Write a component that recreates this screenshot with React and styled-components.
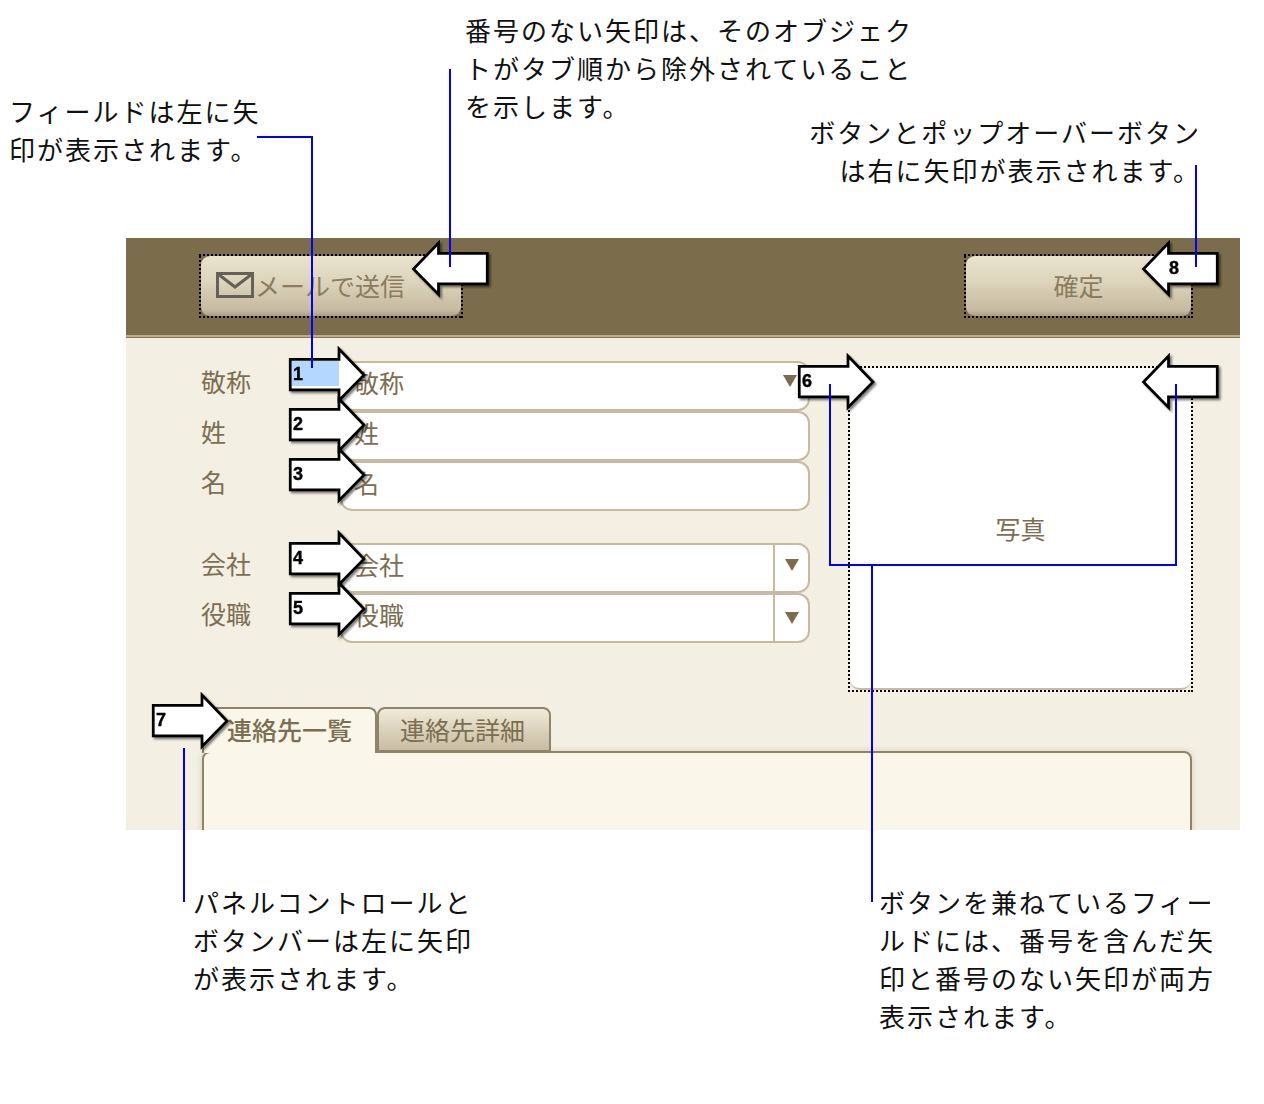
import React from "react";
import styled, { createGlobalStyle, css } from "styled-components";

const Global = createGlobalStyle`
  html, body { margin: 0; padding: 0; background: #fff; }
  body { font-family: "Noto Sans CJK JP", "Liberation Sans", sans-serif; }
`;

const TEXT = "#7c6e50";
const LINE = "#c6baa0";

const dots = css`
  padding: 2px;
  background-image:
    repeating-linear-gradient(90deg, #000 0 2.5px, transparent 2.5px 4px),
    repeating-linear-gradient(90deg, #000 0 2.5px, transparent 2.5px 4px),
    repeating-linear-gradient(0deg, #000 0 2.5px, transparent 2.5px 4px),
    repeating-linear-gradient(0deg, #000 0 2.5px, transparent 2.5px 4px);
  background-size: 100% 2px, 100% 2px, 2px 100%, 2px 100%;
  background-position: left top, left bottom, left top, right top;
  background-repeat: no-repeat;
`;

const Canvas = styled.div`
  position: relative;
  width: 1264px;
  height: 1104px;
  padding: 238px 24px 0 126px;
  box-sizing: border-box;
  overflow: hidden;
`;
const Win = styled.div`
  position: relative;
  z-index: 0;
  width: 1114px;
  height: 592px;
  background: #f4efe3;
  overflow: hidden;
`;
const Toolbar = styled.div`
  height: 97px;
  box-sizing: border-box;
  padding: 16px 47px 0 73px;
  display: flex;
  justify-content: space-between;
  align-items: flex-start;
  background: #7b6d4c;
`;
const ToolbarEdge = styled.div`
  height: 3px;
  background: linear-gradient(#bcae93 0 66%, #83745a 66%);
`;
const FocusRing = styled.div`
  ${dots}
  display: flex;
`;
const ToolButton = styled.div`
  width: ${(p) => p.$w}px;
  height: 60px;
  box-sizing: border-box;
  padding: 0 15px 2px;
  border-radius: 9px;
  background: linear-gradient(#eae3ce 0%, #dcd3ba 45%, #c6baa0 90%, #ad9f84 100%);
  display: flex;
  align-items: center;
  justify-content: ${(p) => (p.$center ? "center" : "flex-start")};
  gap: 1px;
  font-size: 25px;
  color: #8a7c60;
`;
const Body = styled.div`
  display: flex;
  align-items: flex-start;
  padding: 23px 0 0 75px;
`;
const FormColumn = styled.div`
  width: 609px;
  display: flex;
  flex-direction: column;
  gap: 32px;
`;
const FieldGroup = styled.div`
  display: flex;
  flex-direction: column;
`;
const Row = styled.div`
  display: flex;
  align-items: flex-start;
`;
const Label = styled.div`
  width: 139px;
  font-size: 25px;
  line-height: 40px;
  color: ${TEXT};
`;
const Field = styled.div`
  position: relative;
  flex: 1;
  height: 50px;
  box-sizing: border-box;
  background: #fff;
  border: 2px solid ${LINE};
  border-radius: 12px;
  padding-left: 12px;
  display: flex;
  align-items: center;
  justify-content: space-between;
  font-size: 25px;
  line-height: 34px;
  color: ${TEXT};
`;
const FieldText = styled.span`
  display: block;
  padding-bottom: 8px;
`;
const Triangle = styled.span`
  display: block;
  width: 0;
  height: 0;
  border-left: 7px solid transparent;
  border-right: 7px solid transparent;
  border-top: 12px solid #7a6c4d;
`;
const PlainDrop = styled.div`
  margin-right: 11px;
  padding-bottom: 10px;
`;
const ComboDrop = styled.div`
  width: 33px;
  height: 100%;
  box-sizing: content-box;
  border-left: 2px solid ${LINE};
  display: flex;
  align-items: center;
  justify-content: center;
  & > span {
    transform: translateY(${(p) => -p.$lift}px);
  }
`;
const PhotoRing = styled.div`
  ${dots}
  margin: 5px 0 0 38px;
  width: 345px;
  height: 326px;
  box-sizing: border-box;
`;
const Photo = styled.div`
  height: 100%;
  background: #fff;
  border-bottom: 2px solid ${LINE};
  border-radius: 0 0 10px 10px;
  box-sizing: border-box;
  display: flex;
  align-items: center;
  justify-content: center;
  font-size: 25px;
  color: ${TEXT};
`;
const TabArea = styled.div`
  margin: 15px 0 0 76px;
  width: 990px;
`;
const TabBar = styled.div`
  display: flex;
  height: 46px;
`;
const Tab = styled.div`
  box-sizing: border-box;
  width: ${(p) => p.$w}px;
  height: ${(p) => (p.$active ? 46 : 45)}px;
  position: relative;
  z-index: ${(p) => (p.$active ? 1 : 0)};
  border: 2px solid #8f8369;
  border-bottom: ${(p) => (p.$active ? "none" : "2px solid #8f8369")};
  border-radius: 8px 8px 0 0;
  background: ${(p) =>
    p.$active ? "#faf6ea" : "linear-gradient(#f0ead8, #c8bca2)"};
  display: flex;
  align-items: center;
  justify-content: center;
  padding: ${(p) => (p.$active ? "0 0 5px" : "0 3px 1px 0")};
  font-size: 25px;
  font-weight: ${(p) => (p.$active ? 500 : 400)};
  color: ${TEXT};
`;
const TabPanel = styled.div`
  margin-top: -2px;
  height: 120px;
  box-sizing: border-box;
  background: #faf6ea;
  border: 2px solid #8f8369;
  border-radius: 8px 8px 0 0;
  box-shadow: 0 0 6px rgba(90, 80, 50, 0.18);
`;

const Callout = styled.div`
  position: absolute;
  left: ${(p) => p.$x}px;
  right: ${(p) => p.$r}px;
  top: ${(p) => p.$y}px;
  font-size: 26px;
  line-height: 38px;
  letter-spacing: 2px;
  font-weight: 400;
  color: #111;
  white-space: nowrap;
  text-align: ${(p) => (p.$r !== undefined ? "right" : "left")};
`;
const Leader = styled.div`
  position: absolute;
  left: ${(p) => p.$x}px;
  top: ${(p) => p.$y}px;
  width: ${(p) => p.$w}px;
  height: ${(p) => p.$h}px;
  background: #0000f5;
`;
const ArrowBox = styled.svg`
  position: absolute;
  left: ${(p) => p.$x - 2}px;
  top: ${(p) => p.$y - 2}px;
  width: 84px;
  height: 62px;
  filter: drop-shadow(2px 2px 1px rgba(0, 0, 0, 0.5));
`;
const ArrowNum = styled.text`
  font-family: "Liberation Sans", Arial, sans-serif;
  font-size: 18px;
  font-weight: 700;
  fill: #000;
  stroke: #000;
  stroke-width: 0.4;
`;

function Arrow({ x, y, n, left, mark }) {
  const pts = left
    ? "2.5,29 27.5,3 27.5,13.25 76.25,13.25 76.25,43.75 27.5,43.75 27.5,54.5"
    : "3.25,13.25 52,13.25 52,3 77,29 52,54.5 52,43.75 3.25,43.75";
  return (
    <ArrowBox $x={x} $y={y} viewBox="0 0 84 62">
      <polygon points={pts} fill="#fff" stroke="#000" strokeWidth="2.75" strokeMiterlimit="10" />
      {mark && <rect x="5" y="15" width="47" height="25" fill="#b3d7ff" />}
      {n && (
        <ArrowNum x={left ? 28 : 6} y="34">
          {n}
        </ArrowNum>
      )}
    </ArrowBox>
  );
}

const MailIcon = () => (
  <svg width="38" height="26" viewBox="0 0 38 26" fill="none" stroke="#65615a" strokeWidth="3">
    <rect x="1.5" y="1.5" width="35" height="23" />
    <path d="M2 2 L19 15 L36 2" />
  </svg>
);

const Lines = ({ items }) =>
  items.map((t, i) => (
    <React.Fragment key={i}>
      {t}
      {i < items.length - 1 && <br />}
    </React.Fragment>
  ));

export default function App() {
  return (
    <Canvas>
      <Global />
      <Win>
        <Toolbar>
          <FocusRing>
            <ToolButton $w={260}>
              <MailIcon />
              メールで送信
            </ToolButton>
          </FocusRing>
          <FocusRing>
            <ToolButton $w={225} $center>
              確定
            </ToolButton>
          </FocusRing>
        </Toolbar>
        <ToolbarEdge />
        <Body>
          <FormColumn>
            <FieldGroup>
              <Row>
                <Label>敬称</Label>
                <Field>
                  <FieldText>敬称</FieldText>
                  <PlainDrop>
                    <Triangle />
                  </PlainDrop>
                </Field>
              </Row>
              <Row>
                <Label>姓</Label>
                <Field>
                  <FieldText>姓</FieldText>
                </Field>
              </Row>
              <Row>
                <Label>名</Label>
                <Field>
                  <FieldText>名</FieldText>
                </Field>
              </Row>
            </FieldGroup>
            <FieldGroup>
              <Row>
                <Label>会社</Label>
                <Field>
                  <FieldText>会社</FieldText>
                  <ComboDrop $lift={3}>
                    <Triangle />
                  </ComboDrop>
                </Field>
              </Row>
              <Row>
                <Label>役職</Label>
                <Field>
                  <FieldText>役職</FieldText>
                  <ComboDrop $lift={0}>
                    <Triangle />
                  </ComboDrop>
                </Field>
              </Row>
            </FieldGroup>
          </FormColumn>
          <PhotoRing>
            <Photo>写真</Photo>
          </PhotoRing>
        </Body>
        <TabArea>
          <TabBar>
            <Tab $w={175} $active>
              連絡先一覧
            </Tab>
            <Tab $w={174}>連絡先詳細</Tab>
          </TabBar>
          <TabPanel />
        </TabArea>
      </Win>

      <Arrow x={413} y={242} left />
      <Arrow x={1143} y={242} left n="8" />
      <Arrow x={289} y={348} n="1" mark />
      <Arrow x={289} y={398} n="2" />
      <Arrow x={289} y={448} n="3" />
      <Arrow x={289} y={532} n="4" />
      <Arrow x={289} y={582} n="5" />
      <Arrow x={798} y={355} n="6" />
      <Arrow x={1143} y={355} left />
      <Arrow x={152} y={694} n="7" />

      <Leader $x={257} $y={136} $w={56} $h={2} />
      <Leader $x={311} $y={136} $w={2} $h={232} />
      <Leader $x={449} $y={69} $w={2} $h={198} />
      <Leader $x={1195} $y={165} $w={2} $h={102} />
      <Leader $x={829} $y={384} $w={2} $h={182} />
      <Leader $x={1175} $y={384} $w={2} $h={182} />
      <Leader $x={829} $y={564} $w={348} $h={2} />
      <Leader $x={871} $y={565} $w={2} $h={337} />
      <Leader $x={183} $y={748} $w={2} $h={154} />

      <Callout $x={9} $y={92}>
        <Lines items={["フィールドは左に矢", "印が表示されます。"]} />
      </Callout>
      <Callout $x={465} $y={11}>
        <Lines items={["番号のない矢印は、そのオブジェク", "トがタブ順から除外されていること", "を示します。"]} />
      </Callout>
      <Callout $r={63} $y={113}>
        <Lines items={["ボタンとポップオーバーボタン", "は右に矢印が表示されます。"]} />
      </Callout>
      <Callout $x={193} $y={883}>
        <Lines items={["パネルコントロールと", "ボタンバーは左に矢印", "が表示されます。"]} />
      </Callout>
      <Callout $x={879} $y={883}>
        <Lines items={["ボタンを兼ねているフィー", "ルドには、番号を含んだ矢", "印と番号のない矢印が両方", "表示されます。"]} />
      </Callout>
    </Canvas>
  );
}
